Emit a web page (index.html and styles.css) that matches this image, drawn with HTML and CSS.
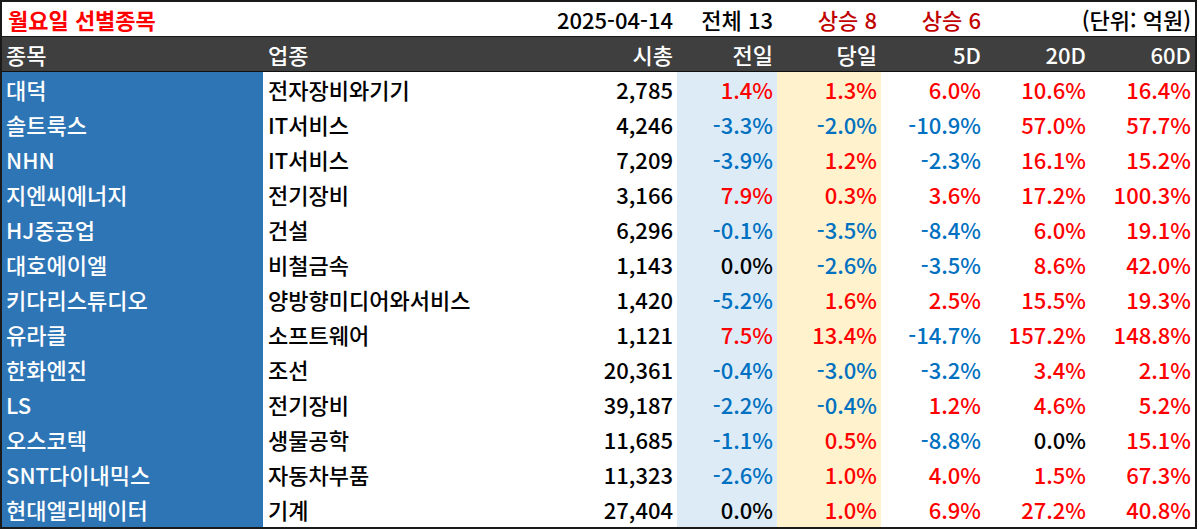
FILE: index.html
```html
<!DOCTYPE html>
<html lang="ko">
<head>
<meta charset="utf-8">
<title>월요일 선별종목</title>
<link rel="stylesheet" href="styles.css">
</head>
<body>
<div class="sheet">
  <div class="row title-row">
    <div class="cell title">월요일 선별종목</div>
    <div class="cell r span2">2025-04-14</div>
    <div class="cell r">전체 13</div>
    <div class="cell r dred">상승 8</div>
    <div class="cell r dred">상승 6</div>
    <div class="cell r span2">(단위: 억원)</div>
  </div>
  <div class="row head-row">
    <div class="cell">종목</div>
    <div class="cell">업종</div>
    <div class="cell r">시총</div>
    <div class="cell r">전일</div>
    <div class="cell r">당일</div>
    <div class="cell r">5D</div>
    <div class="cell r">20D</div>
    <div class="cell r">60D</div>
  </div>
  <div class="body">
    <div class="row"><div class="cell name">대덕</div><div class="cell">전자장비와기기</div><div class="cell r">2,785</div><div class="cell r prev up">1.4%</div><div class="cell r today up">1.3%</div><div class="cell r up">6.0%</div><div class="cell r up">10.6%</div><div class="cell r up">16.4%</div></div>
    <div class="row"><div class="cell name">솔트룩스</div><div class="cell">IT서비스</div><div class="cell r">4,246</div><div class="cell r prev dn">-3.3%</div><div class="cell r today dn">-2.0%</div><div class="cell r dn">-10.9%</div><div class="cell r up">57.0%</div><div class="cell r up">57.7%</div></div>
    <div class="row"><div class="cell name">NHN</div><div class="cell">IT서비스</div><div class="cell r">7,209</div><div class="cell r prev dn">-3.9%</div><div class="cell r today up">1.2%</div><div class="cell r dn">-2.3%</div><div class="cell r up">16.1%</div><div class="cell r up">15.2%</div></div>
    <div class="row"><div class="cell name">지엔씨에너지</div><div class="cell">전기장비</div><div class="cell r">3,166</div><div class="cell r prev up">7.9%</div><div class="cell r today up">0.3%</div><div class="cell r up">3.6%</div><div class="cell r up">17.2%</div><div class="cell r up">100.3%</div></div>
    <div class="row"><div class="cell name">HJ중공업</div><div class="cell">건설</div><div class="cell r">6,296</div><div class="cell r prev dn">-0.1%</div><div class="cell r today dn">-3.5%</div><div class="cell r dn">-8.4%</div><div class="cell r up">6.0%</div><div class="cell r up">19.1%</div></div>
    <div class="row"><div class="cell name">대호에이엘</div><div class="cell">비철금속</div><div class="cell r">1,143</div><div class="cell r prev">0.0%</div><div class="cell r today dn">-2.6%</div><div class="cell r dn">-3.5%</div><div class="cell r up">8.6%</div><div class="cell r up">42.0%</div></div>
    <div class="row"><div class="cell name">키다리스튜디오</div><div class="cell">양방향미디어와서비스</div><div class="cell r">1,420</div><div class="cell r prev dn">-5.2%</div><div class="cell r today up">1.6%</div><div class="cell r up">2.5%</div><div class="cell r up">15.5%</div><div class="cell r up">19.3%</div></div>
    <div class="row"><div class="cell name">유라클</div><div class="cell">소프트웨어</div><div class="cell r">1,121</div><div class="cell r prev up">7.5%</div><div class="cell r today up">13.4%</div><div class="cell r dn">-14.7%</div><div class="cell r up">157.2%</div><div class="cell r up">148.8%</div></div>
    <div class="row"><div class="cell name">한화엔진</div><div class="cell">조선</div><div class="cell r">20,361</div><div class="cell r prev dn">-0.4%</div><div class="cell r today dn">-3.0%</div><div class="cell r dn">-3.2%</div><div class="cell r up">3.4%</div><div class="cell r up">2.1%</div></div>
    <div class="row"><div class="cell name">LS</div><div class="cell">전기장비</div><div class="cell r">39,187</div><div class="cell r prev dn">-2.2%</div><div class="cell r today dn">-0.4%</div><div class="cell r up">1.2%</div><div class="cell r up">4.6%</div><div class="cell r up">5.2%</div></div>
    <div class="row"><div class="cell name">오스코텍</div><div class="cell">생물공학</div><div class="cell r">11,685</div><div class="cell r prev dn">-1.1%</div><div class="cell r today up">0.5%</div><div class="cell r dn">-8.8%</div><div class="cell r">0.0%</div><div class="cell r up">15.1%</div></div>
    <div class="row"><div class="cell name">SNT다이내믹스</div><div class="cell">자동차부품</div><div class="cell r">11,323</div><div class="cell r prev dn">-2.6%</div><div class="cell r today up">1.0%</div><div class="cell r up">4.0%</div><div class="cell r up">1.5%</div><div class="cell r up">67.3%</div></div>
    <div class="row"><div class="cell name">현대엘리베이터</div><div class="cell">기계</div><div class="cell r">27,404</div><div class="cell r prev">0.0%</div><div class="cell r today up">1.0%</div><div class="cell r up">6.9%</div><div class="cell r up">27.2%</div><div class="cell r up">40.8%</div></div>
  </div>
</div>
</body>
</html>
```

FILE: styles.css
```css
html, body {
  margin: 0;
  padding: 0;
  background: #ffffff;
}
body {
  font-family: "Noto Sans CJK KR", "Noto Sans", sans-serif;
  font-size: 22px;
  font-weight: 500;
  color: #000000;
}
.sheet {
  width: 1193px;
  border: 2px solid #1a1a1a;
  background: #ffffff;
}
.row {
  display: grid;
  grid-template-columns: 261px 314px 100px 100px 104px 104px 105px 105px;
  height: 35px;
}
.cell {
  display: flex;
  align-items: center;
  padding: 0 4px 1px 5px;
  line-height: 1;
  white-space: nowrap;
  overflow: hidden;
}
.cell.r {
  justify-content: flex-end;
}
.span2 {
  grid-column: span 2;
}
.title-row {
  height: 34px;
  border-bottom: 1px solid #1a1a1a;
}
.title {
  color: #ff0000;
  font-weight: 700;
  padding-left: 6px;
}
.dred {
  color: #c00000;
}
.head-row {
  height: 34px;
  background: #3f3f3f;
  color: #ffffff;
  border-bottom: 1px solid #111111;
}
.head-row .cell:first-child {
  padding-left: 4px;
}
.name {
  background: #2e75b6;
  color: #ffffff;
  padding-left: 4px;
}
.prev {
  background: #ddebf7;
}
.today {
  background: #fff2cc;
}
.up {
  color: #ff0000;
}
.dn {
  color: #0070c0;
}
```
